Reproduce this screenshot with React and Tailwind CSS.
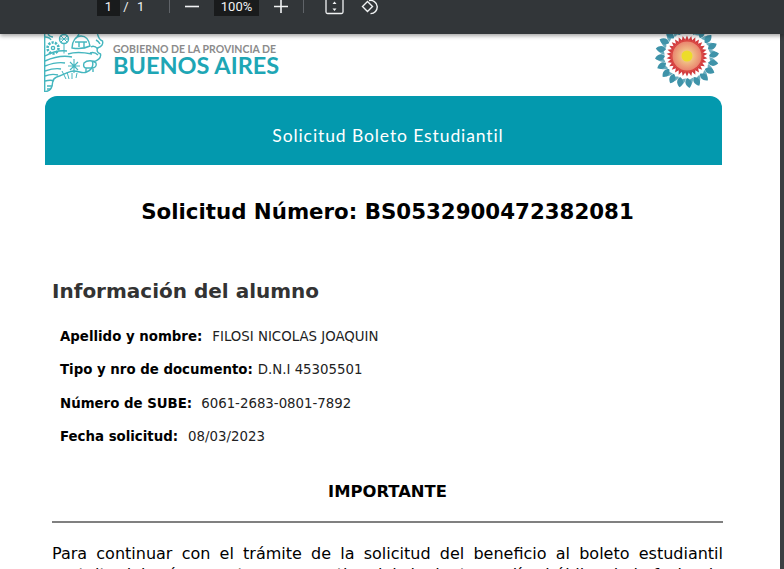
const SANS = '[font-family:"DejaVu_Sans",sans-serif]';

const rows = [
  { label: 'Apellido y nombre:', value: 'FILOSI NICOLAS JOAQUIN', gap: 'ml-[10px]' },
  { label: 'Tipo y nro de documento:', value: 'D.N.I 45305501', gap: 'ml-[5px]' },
  { label: 'Número de SUBE:', value: '6061-2683-0801-7892', gap: 'ml-[9px]' },
  { label: 'Fecha solicitud:', value: '08/03/2023', gap: 'ml-[10px]' },
];

function Separator() {
  return <div className="w-px h-[13px] bg-[#5f6368]" />;
}

function Toolbar() {
  return (
    <div className="relative z-10 flex items-start h-[34px] shrink-0 pl-[97px] bg-[#323639] text-[#f1f3f4] shadow-[0_2px_4px_rgba(0,0,0,0.35)] font-['Roboto',sans-serif] text-[13px] leading-[13px] overflow-hidden">
      <div className="w-[23px] h-4 bg-[#191b1c] text-center">1</div>
      <div className="w-[12px] text-center">/</div>
      <div className="ml-[5px] w-[10px]">1</div>
      <div className="ml-[22px]"><Separator /></div>
      <svg className="ml-[15px]" width="14" height="14" viewBox="0 0 14 14"><path d="M0 6.5h14" stroke="#f1f3f4" strokeWidth="1.6" /></svg>
      <div className="ml-[15px] w-[45px] h-4 bg-[#191b1c] text-center">100%</div>
      <svg className="ml-[15px]" width="14" height="14" viewBox="0 0 14 14"><path d="M0 6.5h14M7 0v13" stroke="#f1f3f4" strokeWidth="1.6" /></svg>
      <div className="ml-[15px]"><Separator /></div>
      <svg className="ml-[21px]" width="19" height="15" viewBox="0 0 19 15" fill="none">
        <path d="M1 0v12a1.5 1.5 0 0 0 1.5 1.5h14A1.5 1.5 0 0 0 18 12V0" stroke="#f1f3f4" strokeWidth="1.3" />
        <path d="M9.5 1.5l2 2.5h-4zM9.5 11l2-2.5h-4z" fill="#f1f3f4" />
      </svg>
      <svg className="ml-[17px]" width="18" height="15" viewBox="0 0 18 15" fill="none">
        <path d="M6.5 1.5l-5 5 5 5 5-5z" stroke="#f1f3f4" strokeWidth="1.4" />
        <path d="M8 0.6a6.6 6.6 0 1 1 1.5 13" stroke="#f1f3f4" strokeWidth="1.4" />
      </svg>
    </div>
  );
}

// provincia de buenos aires, dibujo lineal del escudo
function ProvinceLogo() {
  return (
    <svg className="shrink-0" width="61" height="58" viewBox="0 0 61 58" fill="none" stroke="#45b6bf" strokeWidth="1.4">
      <path d="M0.7 0v58M0.5 58c6-1 8-4 8-9 0-4 3-6 7-7 6-2 10-5 14-5 6 0 9 3 13 1 5-2 7-6 6-10 5-1 9-4 8-8-3-1-4-3-3-6 4-1 6-4 5-7-3-1-4-3-5-7" />
      <circle cx="9" cy="14" r="5.5" strokeWidth="2.6" strokeDasharray="2.2 1.2" />
      <circle cx="9" cy="14" r="1.6" />
      <path d="M1 3c3 0 5 1 6 3M4 0c1 2 3 3 5 3" />
      <circle cx="20" cy="5" r="4.5" />
      <path d="M20 9.5v10M16 5h8M17 2l6 6M23 2l-6 6" strokeWidth="1" />
      <path d="M28 14c0-7 4-12 9-12s8 4 9 10c-6 3-12 3-18 2zM33 3l2-3M31 8h12M35 8v5M40 8v5" />
      <path d="M1 22c7-4 14-6 22-5M1 27c9-4 17-6 27-4M1 32c8-3 14-4 20-3M1 37c6-2 11-3 16-2M1 42c5-2 9-2 13-1M1 47c4-1 7-1 9 0M24 20c6-2 14-2 24 0" />
      <path d="M26 28l8 8M34 28l-8 8M30 25v14M24 32h12" strokeWidth="1.1" />
      <path d="M40 29c3-3 9-3 12 0 1 3-1 5-4 5h-6c-2 0-3-2-2-5zM42 34v4M49 34v4" />
      <path d="M18 37l4 8M23 38l2 7M28 39l0 6M33 39l-1 5" strokeWidth="1" />
      <path d="M47 13c3-2 5 0 7 2M46 19c3-1 6 0 8 2M52 6c2 1 3 2 4 4" />
      <path d="M3 52h5M3 55h4" />
    </svg>
  );
}

function SunLogo() {
  const leaves = Array.from({ length: 20 }, (_, i) => i * 18);
  const rays = Array.from({ length: 30 }, (_, i) => i * 12);
  return (
    <svg className="shrink-0 -mt-[12px]" width="68" height="68" viewBox="-34 -34 68 68">
      <defs>
        <radialGradient id="sunCore">
          <stop offset="0.3" stopColor="#f2c98a" />
          <stop offset="1" stopColor="#e98570" />
        </radialGradient>
      </defs>
      {leaves.map((a) => (
        <g key={a} transform={`rotate(${a})`}>
          <path d="M0 -22c-5 -2 -6 -6 -2.500 -10 5 3 5 7 2.500 10z" fill="#3f93a9" />
          <path d="M1 -22.500c1 -4 3 -6 6 -7 1 4 -1 7 -6 7z" fill="#68adbf" />
        </g>
      ))}
      <circle r="21.500" fill="#fff" />
      {rays.map((a) => (
        <path key={a} transform={`rotate(${a})`} d="M-2.200 -15.500L0 -20.500L2.200 -15.500z" fill="#d23c3f" />
      ))}
      <circle r="16" fill="#d9443f" />
      <circle r="14.500" fill="url(#sunCore)" />
      <circle r="5.500" fill="#ecdc2a" />
    </svg>
  );
}

export default function App() {
  return (
    <div className="flex flex-col w-[784px] h-[569px] overflow-hidden bg-[#3c3f42]">
      <Toolbar />
      <div className={`w-[780px] flex-1 overflow-hidden bg-white ${SANS}`}>
        <div className="flex h-[62px] pl-[44px]">
          <ProvinceLogo />
          <div className="ml-[8px] pt-[10px] font-['Lato',sans-serif] font-bold">
            <div className="text-[10.5px] leading-[11px] text-[#8b8b8b] whitespace-nowrap">GOBIERNO DE LA PROVINCIA DE</div>
            <div className="text-[23.5px] leading-[20px] text-[#1ea6b5] whitespace-nowrap">BUENOS AIRES</div>
          </div>
          <div className="flex-1" />
          <div className="mr-[59px]"><SunLogo /></div>
        </div>

        <div className="flex items-center justify-center ml-[45px] w-[677px] h-[69px] pl-[9px] pt-[12px] rounded-t-[12px] bg-[#0399ae] text-white text-[17.5px] tracking-[0.9px] font-['Lato',sans-serif]">
          Solicitud Boleto Estudiantil
        </div>

        <div className="ml-[52px] w-[671px]">
          <h1 className="mt-[33px] text-center text-[21.33px] leading-[28px] font-bold text-black whitespace-nowrap">
            Solicitud Número: BS0532900472382081
          </h1>
          <h2 className="mt-[51px] text-[20px] leading-[28px] font-bold text-[#333]">Información del alumno</h2>

          <div className="mt-[22px] ml-[8px] flex flex-col gap-[13.4px] text-[13.33px] leading-[20px] text-[#222]">
            {rows.map((row) => (
              <div key={row.label} className="flex whitespace-nowrap">
                <span className="font-bold text-black">{row.label}</span>
                <span className={row.gap}>{row.value}</span>
              </div>
            ))}
          </div>

          <div className="mt-[35px] text-center text-[16.4px] leading-[20px] font-bold text-black">IMPORTANTE</div>
          <hr className="mt-[19px] h-[2px] border-0 bg-[#808080]" />
          <p className="mt-[20px] text-[16px] leading-[21px] text-black text-justify">
            Para continuar con el trámite de la solicitud del beneficio al boleto estudiantil
            gratuito deberá presentarse con activo del siguiente en días hábiles de la fecha de
            la solicitud.
          </p>
        </div>
      </div>
    </div>
  );
}
